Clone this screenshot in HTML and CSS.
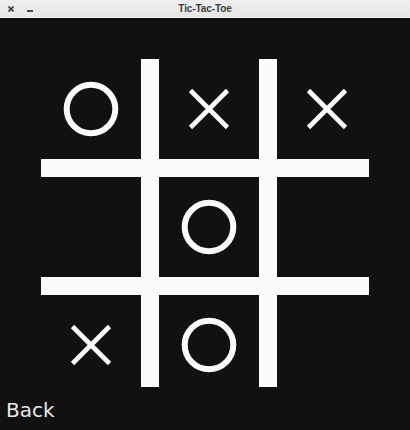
FILE: index.html
```html
<!DOCTYPE html>
<html lang="en">
<head>
<meta charset="utf-8">
<title>Tic-Tac-Toe</title>
<link rel="stylesheet" href="styles.css">
</head>
<body>
<div class="window">
  <header class="titlebar">
    <div class="controls">
      <svg class="ctl-close" width="6" height="6" viewBox="0 0 6 6"><path d="M0.5 0.5 L5.5 5.5 M5.5 0.5 L0.5 5.5"/></svg>
      <span class="ctl-min"></span>
    </div>
    <div class="title">Tic-Tac-Toe</div>
    <div></div>
  </header>
  <main class="content">
    <div class="board">
      <div class="vbar col2"></div>
      <div class="vbar col4"></div>
      <div class="hbar row2"></div>
      <div class="hbar row4"></div>

      <div class="cell c1 r1"><svg class="mark" viewBox="0 0 100 100"><circle cx="50" cy="50" r="24.3"/></svg></div>
      <div class="cell c3 r1"><svg class="mark" viewBox="0 0 100 100"><path class="x" d="M31.5 31.5 L68.5 68.5 M68.5 31.5 L31.5 68.5"/></svg></div>
      <div class="cell c5 r1"><svg class="mark" viewBox="0 0 100 100"><path class="x" d="M31.5 31.5 L68.5 68.5 M68.5 31.5 L31.5 68.5"/></svg></div>

      <div class="cell c1 r3"></div>
      <div class="cell c3 r3"><svg class="mark" viewBox="0 0 100 100"><circle cx="50" cy="50" r="24.3"/></svg></div>
      <div class="cell c5 r3"></div>

      <div class="cell c1 r5"><svg class="mark" viewBox="0 0 100 100"><path class="x" d="M31.5 31.5 L68.5 68.5 M68.5 31.5 L31.5 68.5"/></svg></div>
      <div class="cell c3 r5"><svg class="mark" viewBox="0 0 100 100"><circle cx="50" cy="50" r="24.3"/></svg></div>
      <div class="cell c5 r5"></div>
    </div>
    <div class="back">Back</div>
  </main>
</div>
</body>
</html>
```

FILE: styles.css
```css
html, body {
  margin: 0;
  padding: 0;
  background: #111111;
}

.window {
  width: 410px;
  height: 430px;
  display: flex;
  flex-direction: column;
  background: #111111;
  overflow: hidden;
}

.titlebar {
  box-sizing: border-box;
  height: 18px;
  display: grid;
  grid-template-columns: 1fr auto 1fr;
  align-items: center;
  background: linear-gradient(#eeeeee, #e6e6e6);
  border-bottom: 1px solid #f4f4f4;
}

.controls {
  display: flex;
  align-items: center;
  padding-left: 8px;
  gap: 13px;
}

.ctl-close {
  display: block;
  margin-top: 1px;
}

.ctl-close path {
  stroke: #3a3a3a;
  stroke-width: 1.6;
  fill: none;
}

.ctl-min {
  display: block;
  width: 6px;
  height: 2px;
  margin-top: 4px;
  background: #4a4a4a;
}

.title {
  font-family: "Liberation Sans", Arial, sans-serif;
  font-weight: bold;
  font-size: 10px;
  line-height: 17px;
  color: #3c3c3c;
  letter-spacing: -0.1px;
}

.content {
  flex: 1;
  display: flex;
  flex-direction: column;
  padding-top: 41px;
}

.board {
  margin-left: 41px;
  display: grid;
  grid-template-columns: 100px 18px 100px 18px 100px;
  grid-template-rows: 100px 18px 100px 18px 100px;
}

.vbar {
  grid-row: 1 / span 5;
  width: 18px;
  height: 328px;
  align-self: start;
  background: #fafafa;
}

.hbar {
  grid-column: 1 / span 5;
  height: 18px;
  width: 328px;
  justify-self: start;
  background: #fafafa;
}

.col2 { grid-column: 2; }
.col4 { grid-column: 4; }
.row2 { grid-row: 2; }
.row4 { grid-row: 4; }

.c1 { grid-column: 1; }
.c3 { grid-column: 3; }
.c5 { grid-column: 5; }
.r1 { grid-row: 1; }
.r3 { grid-row: 3; }
.r5 { grid-row: 5; }

.cell {
  width: 100px;
  height: 100px;
}

.mark {
  display: block;
  width: 100px;
  height: 100px;
}

.mark circle {
  fill: none;
  stroke: #fafafa;
  stroke-width: 6;
}

.mark .x {
  fill: none;
  stroke: #fafafa;
  stroke-width: 4.6;
  stroke-linecap: butt;
}

.back {
  margin-top: 3px;
  padding-left: 6px;
  font-family: "DejaVu Sans", "Liberation Sans", sans-serif;
  font-size: 20px;
  color: #e8e8e8;
}
```
